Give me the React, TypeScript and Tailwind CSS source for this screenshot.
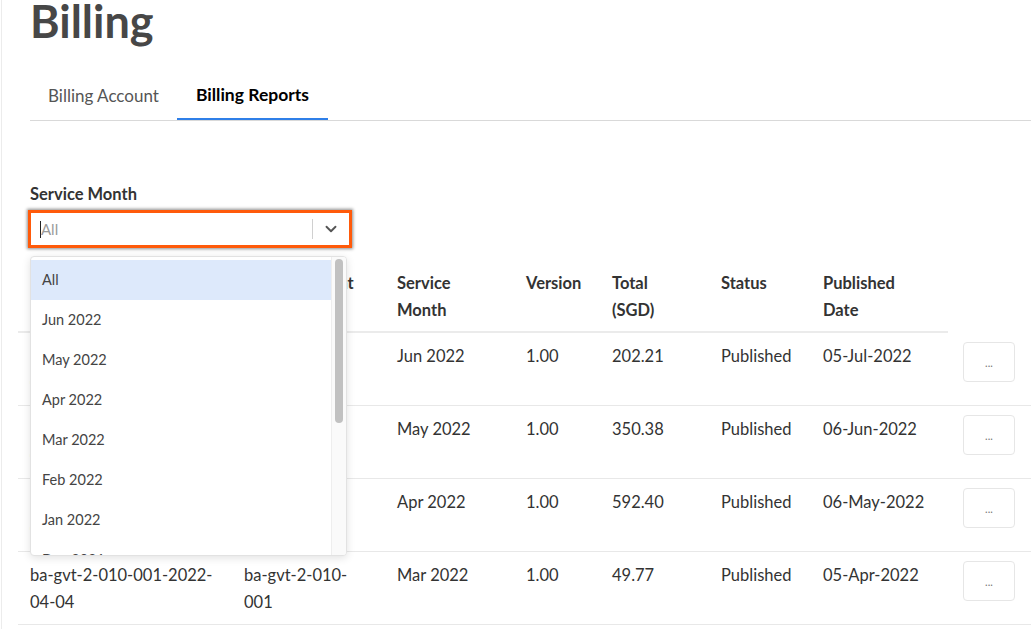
import { ChevronDown } from 'lucide-react';

const months = ['All', 'Jun 2022', 'May 2022', 'Apr 2022', 'Mar 2022', 'Feb 2022', 'Jan 2022', 'Dec 2021'];

const rows = [
  { id: 'ba-gvt-2-010-001-2022-07-04', acct: 'ba-gvt-2-010-001', month: 'Jun 2022', ver: '1.00', total: '202.21', status: 'Published', date: '05-Jul-2022' },
  { id: 'ba-gvt-2-010-001-2022-06-04', acct: 'ba-gvt-2-010-001', month: 'May 2022', ver: '1.00', total: '350.38', status: 'Published', date: '06-Jun-2022' },
  { id: 'ba-gvt-2-010-001-2022-05-04', acct: 'ba-gvt-2-010-001', month: 'Apr 2022', ver: '1.00', total: '592.40', status: 'Published', date: '06-May-2022' },
  { id: 'ba-gvt-2-010-001-2022-04-04', acct: 'ba-gvt-2-010-001', month: 'Mar 2022', ver: '1.00', total: '49.77', status: 'Published', date: '05-Apr-2022' },
];

const headers = [['Billing Report'], ['Billing Account'], ['Service', 'Month'], ['Version'], ['Total', '(SGD)'], ['Status'], ['Published', 'Date']];

const cols = 'grid grid-cols-[214px_153px_129px_86px_109px_102px_137px_83px]';

export default function App() {
  return (
    <div
      className="w-[1031px] h-[629px] overflow-hidden bg-white border-l border-r border-[#ececec] ml-[1px] text-[#333]"
      style={{ fontFamily: 'Lato, "Noto Sans", sans-serif' }}
    >
      {/* Title */}
      <h1 className="pl-[28px] -mt-[10px] text-[45px] font-bold text-[#474747] leading-[62px]">Billing</h1>

      {/* Tabs */}
      <div className="ml-[28px] mt-[20px] flex border-b border-[#d9d9d9]">
        <div className="px-[18px] h-[48px] flex items-center text-[17px] text-[#555]">Billing Account</div>
        <div className="px-[19px] h-[48px] flex items-center text-[17.5px] font-bold text-black border-b-2 border-[#2f7fe8] -mb-[1px]">
          Billing Reports
        </div>
      </div>

      {/* Filter */}
      <div className="pl-[28px] pt-[61px]">
        <div className="text-[16.5px] font-bold leading-[24px] text-[#333]">Service Month</div>
        <div className="relative mt-[4px] w-[322px]">
          <div className="-ml-[2px] p-[3px] bg-[#ff5a0a] shadow-[0_0_3px_1px_rgba(0,0,0,0.45)]">
            <div className="h-[32px] bg-white flex items-center">
              <div className="flex-1 flex items-center pl-[9px]">
                <span className="w-px h-[17px] bg-[#222]" />
                <span className="text-[15px] text-[#9a9a9a]">All</span>
              </div>
              <span className="w-px h-[20px] bg-[#d0d0d0]" />
              <div className="w-[36px] flex justify-center">
                <ChevronDown size={18} strokeWidth={2.5} className="text-[#555]" />
              </div>
            </div>
          </div>

          {/* Dropdown menu */}
          <div className="absolute z-10 left-0 top-[46px] w-[317px] h-[300px] bg-white rounded-[4px] border border-[#e2e2e2] shadow-[0_2px_8px_rgba(0,0,0,0.12)] overflow-hidden flex">
            <div className="flex-1 pt-[3px]">
              {months.map((m, i) => (
                <div
                  key={m}
                  className={`h-[40px] pl-[11px] flex items-center text-[14.5px] text-[#444] ${i === 0 ? 'bg-[#dde9fb]' : ''}`}
                >
                  {m}
                </div>
              ))}
            </div>
            <div className="w-[15px] border-l border-[#eee] bg-[#fafafa] pt-[2px] flex justify-center">
              <div className="w-[8px] h-[164px] rounded-full bg-[#c1c1c1]" />
            </div>
          </div>
        </div>
      </div>

      {/* Table */}
      <div className="ml-[16px] mt-[22px] text-[16.5px] leading-[27px]">
        <div className={cols}>
          {headers.map((h) => (
            <div key={h.join(' ')} className="px-[12px] pb-[7px] font-bold border-b-2 border-[#ebebeb]">
              {h.map((line) => (
                <div key={line} className="whitespace-nowrap">{line}</div>
              ))}
            </div>
          ))}
          <div />
        </div>
        {rows.map((r) => (
          <div key={r.id} className={`${cols} h-[73px] border-b border-[#e8e8e8]`}>
            <div className="px-[12px] pt-[10px] break-all">{r.id}</div>
            <div className="px-[12px] pt-[10px]">{r.acct}</div>
            <div className="px-[12px] pt-[10px]">{r.month}</div>
            <div className="px-[12px] pt-[10px]">{r.ver}</div>
            <div className="px-[12px] pt-[10px]">{r.total}</div>
            <div className="px-[12px] pt-[10px]">{r.status}</div>
            <div className="px-[12px] pt-[10px]">{r.date}</div>
            <div className="pl-[15px] pt-[9px]">
              <button className="w-[52px] h-[40px] rounded-[4px] border border-[#e6e6e6] bg-white text-[11px] text-[#777] leading-none">
                ...
              </button>
            </div>
          </div>
        ))}
      </div>
    </div>
  );
}
